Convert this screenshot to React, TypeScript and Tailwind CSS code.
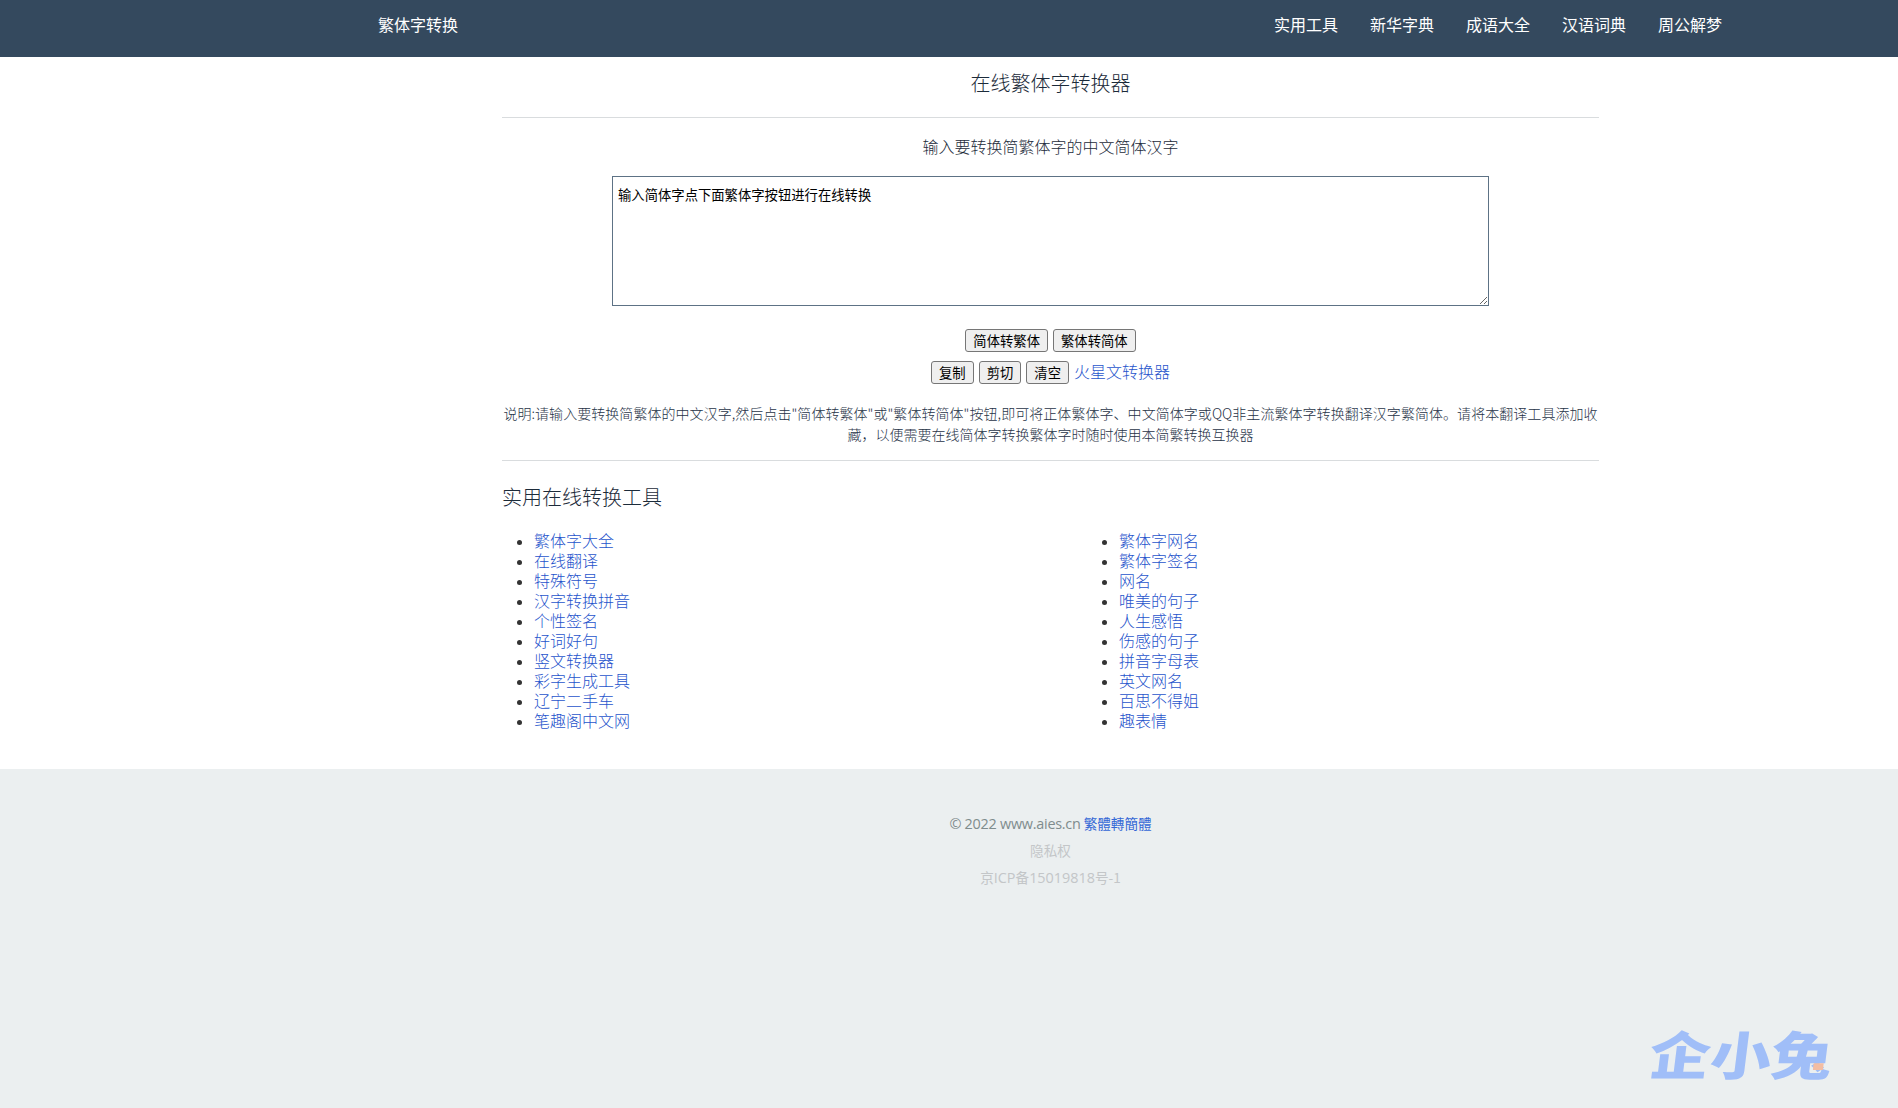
import { useState } from 'react';

const navLinks = ['实用工具', '新华字典', '成语大全', '汉语词典', '周公解梦'];

const leftLinks = [
  '繁体字大全',
  '在线翻译',
  '特殊符号',
  '汉字转换拼音',
  '个性签名',
  '好词好句',
  '竖文转换器',
  '彩字生成工具',
  '辽宁二手车',
  '笔趣阁中文网',
];

const rightLinks = [
  '繁体字网名',
  '繁体字签名',
  '网名',
  '唯美的句子',
  '人生感悟',
  '伤感的句子',
  '拼音字母表',
  '英文网名',
  '百思不得姐',
  '趣表情',
];

const btn =
  'h-[23px] px-[7px] rounded-[3px] border border-[#767676] bg-[#efefef] text-[13.333px] leading-[19px] font-normal text-black whitespace-nowrap';

function LinkList({ items }: { items: string[] }) {
  return (
    <ul className="list-disc pl-8 text-[#333] leading-5 marker:text-[14px]">
      {items.map((item) => (
        <li key={item} className="h-5">
          <a href="#" className="block h-5 font-light text-[#1f54cc]">{item}</a>
        </li>
      ))}
    </ul>
  );
}

export default function App() {
  const [text, setText] = useState('输入简体字点下面繁体字按钮进行在线转换');

  return (
    <div className="relative min-h-[1108px] flex flex-col bg-white text-[16px] text-[#34495e] font-['Noto_Sans_CJK_SC',sans-serif]">
      {/* Header */}
      <header className="h-[57px] bg-[#34495e] pl-[378px] pr-[176px] flex justify-between text-white leading-[48px]">
        <a href="#">繁体字转换</a>
        <nav className="flex gap-8">
          {navLinks.map((item) => (
            <a key={item} href="#">{item}</a>
          ))}
        </nav>
      </header>

      {/* Converter */}
      <main className="ml-[502px] w-[1097px] h-[712px]">
        <h1 className="h-[60px] pt-[11px] text-center text-[20px] leading-[30px] font-light text-[#1c2b3a]">在线繁体字转换器</h1>
        <hr className="border-t border-[#d9dcde]" />

        <p className="h-[58px] pt-[16px] text-center leading-6 font-light text-[#1c2b3a]">输入要转换简繁体字的中文简体汉字</p>
        <textarea
          className="block ml-[110px] w-[877px] h-[130px] border border-[#5d7285] bg-white px-[5px] pt-[9px] text-[13.333px] leading-[18px] text-black resize outline-none"
          value={text}
          onChange={(e) => setText(e.target.value)}
        />

        <div className="mt-[23px] flex justify-center gap-[5px]">
          <button className={btn}>简体转繁体</button>
          <button className={btn}>繁体转简体</button>
        </div>
        <div className="mt-[9px] flex justify-center gap-[5px]">
          <button className={btn}>复制</button>
          <button className={btn}>剪切</button>
          <button className={btn} onClick={() => setText('')}>清空</button>
          <a href="#" className="h-[23px] leading-[21px] font-light text-[#1f54cc]">火星文转换器</a>
        </div>

        <p className="mt-[19px] h-[57px] text-center text-[14px] leading-[21px] font-light text-[#1f3347] whitespace-nowrap">
          <span className="tracking-[0.05px]">
            说明:请输入要转换简繁体的中文汉字,然后点击"简体转繁体"或"繁体转简体"按钮,即可将正体繁体字、中文简体字或QQ非主流繁体字转换翻译汉字繁简体。请将本翻译工具添加收
          </span>
          <br />
          藏，以便需要在线简体字转换繁体字时随时使用本简繁转换互换器
        </p>
        <hr className="border-t border-[#d9dcde]" />

        <h2 className="mt-[21px] text-[20px] leading-[30px] font-light text-[#1c2b3a]">实用在线转换工具</h2>
        <div className="mt-[18px] grid grid-cols-[585px_1fr]">
          <LinkList items={leftLinks} />
          <LinkList items={rightLinks} />
        </div>
      </main>

      {/* Footer */}
      <footer className="flex-1 bg-[#ebeff0] pt-[41px] pl-[203px] text-center text-[13.6px] leading-[27px] text-[#c3c6c8]">
        <p className="text-[#7f8c8d]">
          <span className="font-['Open_Sans'] text-[14.4px] tracking-[-0.25px]">© 2022 www.aies.cn</span>{' '}
          <a href="#" className="text-[#3367d6]">繁體轉簡體</a>
        </p>
        <p>隐私权</p>
        <p>京<span className="font-['Open_Sans'] text-[14.4px]">ICP</span>备<span className="font-['Open_Sans'] text-[14.4px]">15019818</span>号-1</p>
      </footer>

      {/* Watermark */}
      <div className="absolute left-[1650px] top-[1025px] h-[56px] text-[61px] leading-[56px] font-black text-[#a0bef8] whitespace-nowrap origin-center -skew-x-6 scale-y-[0.85]">
        企小兔
        <span className="absolute left-[165px] top-[40px] w-[10px] h-[8px] bg-[#f3bda3]" />
      </div>
    </div>
  );
}
